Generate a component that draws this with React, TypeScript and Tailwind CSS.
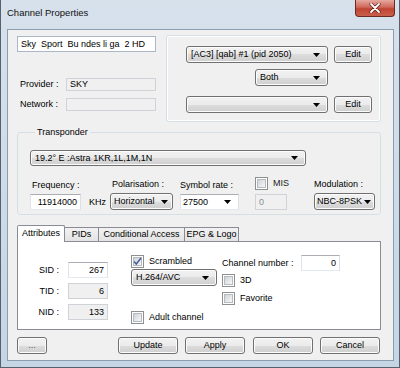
import React from 'react';

// Windows 7 style button / dropdown face
const face =
  'border border-[#707070] rounded-[3px] bg-[linear-gradient(to_bottom,#f2f2f2_0%,#ebebeb_50%,#dddddd_50%,#cfcfcf_100%)] shadow-[inset_0_0_0_1px_#fcfcfc]';

const field = 'border border-[#abadb3] border-l-[#e2e3ea] border-r-[#dbdfe6] border-b-[#e3e9ef]';

function Arrow() {
  return (
    <svg width="7" height="4" viewBox="0 0 7 4" className="shrink-0">
      <path d="M0 0H7L3.5 4Z" fill="#000" />
    </svg>
  );
}

function Drop({ className, text }: { className: string; text?: string }) {
  return (
    <div className={`${face} ${className} flex items-center gap-[2px]`}>
      <span className="flex-1 overflow-hidden whitespace-nowrap">{text}</span>
      <Arrow />
    </div>
  );
}

function Btn({ className, children }: { className: string; children: React.ReactNode }) {
  return <div className={`${face} ${className} h-[17px] flex items-center justify-center`}>{children}</div>;
}

function Box({
  className,
  children,
  disabled,
  right,
}: {
  className: string;
  children?: React.ReactNode;
  disabled?: boolean;
  right?: boolean;
}) {
  return (
    <div
      className={`${className} ${
        disabled ? 'bg-[#f0f0f0] border border-[#cfd2d6]' : `bg-white ${field}`
      } flex items-center px-[3px] whitespace-pre ${right ? 'justify-end' : ''}`}
    >
      {children}
    </div>
  );
}

function Check({ checked }: { checked?: boolean }) {
  return (
    <span className="relative w-[13px] h-[13px] shrink-0 border border-[#8e8f8f] bg-white p-[1px] flex">
      <span className="flex-1 border border-[#b6bbc1] bg-[linear-gradient(135deg,#cfd3d8,#f7f7f7)]" />
      {checked && (
        <svg width="11" height="11" viewBox="0 0 11 11" className="absolute left-[0px] top-[0px]">
          <path d="M2 5.5L4.3 8L9 2" fill="none" stroke="#4a6398" strokeWidth="1.6" />
        </svg>
      )}
    </span>
  );
}

function Tab({ label, active, className }: { label: string; active?: boolean; className: string }) {
  return (
    <div
      className={`${className} border border-[#898c95] border-b-0 flex items-center justify-center ${
        active
          ? 'h-[17px] bg-white -mb-[1px] z-10 rounded-t-[2px] pb-[2px]'
          : 'h-[14px] bg-[linear-gradient(to_bottom,#f2f2f2,#e3e3e3)]'
      }`}
    >
      {label}
    </div>
  );
}

export default function App() {
  return (
    <div className="w-[400px] h-[368px] overflow-hidden font-['Liberation_Sans',Arial,sans-serif] text-[9px] leading-[11px] text-black">
      <div className="h-full flex flex-col border-l border-r border-b border-[#55616e] bg-[linear-gradient(to_bottom,#d7e1ec,#c6d5e4)]">
        {/* Title bar */}
        <div className="h-[29px] flex items-start">
          <div className="pl-[6px] pt-[7px] text-[9.5px] text-[#111]">Channel Properties</div>
          <div className="ml-auto mr-[4px] w-[40px] h-[17px] rounded-b-[4px] border border-t-0 border-[#6b2a22] bg-[linear-gradient(to_bottom,#e5a99f_0%,#d0675a_45%,#bf4432_55%,#c9604c_100%)] flex items-center justify-center">
            <svg width="12" height="10" viewBox="0 0 12 10">
              <path d="M2 1L10 9M10 1L2 9" stroke="#5a2018" strokeWidth="3.2" strokeLinecap="round" />
              <path d="M2 1L10 9M10 1L2 9" stroke="#fff" strokeWidth="1.8" strokeLinecap="round" />
            </svg>
          </div>
        </div>

        {/* Client area */}
        <div className="flex-1 ml-[6px] mr-[5px] mb-[6px] border border-[#8b9db1] bg-[#f0f0f0] flex flex-col">
          {/* Top section */}
          <div className="flex pl-[9px]">
            <div className="w-[139px] pt-[6px] flex flex-col">
              <Box className="h-[16px] w-[139px] !border-[#a9b7c6]">{'Sky  Sport  Bu ndes li ga  2 HD'}</Box>
              <div className="mt-[26px] flex items-center">
                <span className="w-[49px] pl-[3px]">Provider :</span>
                <Box className="h-[13px] w-[90px]" disabled>
                  SKY
                </Box>
              </div>
              <div className="mt-[7px] flex items-center">
                <span className="w-[49px] pl-[3px]">Network :</span>
                <Box className="h-[13px] w-[90px]" disabled />
              </div>
            </div>

            <div className="ml-[10px] mt-[5px] w-[215px] h-[87px] border border-[#d5dfe5] rounded-[3px] shadow-[inset_0_0_0_1px_#ffffff] pl-[19px] pt-[10px] flex flex-col">
              <div className="flex">
                <Drop className="w-[142px] h-[17px] pl-[4px] pr-[7px]" text="[AC3] [qab] #1 (pid 2050)" />
                <Btn className="ml-[6px] w-[38px]">Edit</Btn>
              </div>
              <div className="mt-[6px] pl-[69px] flex">
                <Drop className="w-[73px] h-[17px] pl-[4px] pr-[7px]" text="Both" />
              </div>
              <div className="mt-[10px] flex">
                <Drop className="w-[142px] h-[17px] pl-[4px] pr-[7px]" />
                <Btn className="ml-[6px] w-[38px]">Edit</Btn>
              </div>
            </div>
          </div>

          {/* Transponder */}
          <fieldset className="ml-[9px] mt-[5px] w-[364px] border border-[#d5dfe5] rounded-[3px] pl-[12px] pt-[12px] pb-[4px]">
            <legend className="ml-[5px] px-[2px]">Transponder</legend>
            <Drop className="w-[276px] h-[16px] pl-[4px] pr-[7px]" text={'19.2° E :Astra 1KR,1L,1M,1N'} />
            <div className="mt-[11px] flex items-end">
              <div className="flex flex-col">
                <span className="pl-[2px]">Frequency :</span>
                <Box className="mt-[3px] w-[51px] h-[16px]" right>
                  11914000
                </Box>
              </div>
              <span className="ml-[8px] mb-[2px]">KHz</span>
              <div className="ml-[4px] flex flex-col">
                <span className="pl-[2px]">Polarisation :</span>
                <Drop className="mt-[3px] w-[63px] h-[17px] pl-[3px] pr-[4px]" text="Horizontal" />
              </div>
              <div className="ml-[7px] flex flex-col">
                <span>Symbol rate :</span>
                <div className={`mt-[3px] w-[59px] h-[16px] bg-white ${field} flex items-center pl-[2px] pr-[7px]`}>
                  <span className="flex-1">27500</span>
                  <Arrow />
                </div>
              </div>
              <div className="ml-[16px] flex flex-col">
                <div className="flex items-center gap-[5px]">
                  <Check />
                  <span className="text-[#222]">MIS</span>
                </div>
                <Box className="mt-[4px] w-[32px] h-[16px] text-[#8d8d8d]" disabled>
                  0
                </Box>
              </div>
              <div className="ml-[25px] flex flex-col">
                <span>Modulation :</span>
                <Drop className="mt-[3px] w-[61px] h-[17px] pl-[2px] pr-[3px]" text="NBC-8PSK" />
              </div>
            </div>
          </fieldset>

          {/* Tabs */}
          <div className="ml-[9px] mt-[10px] w-[364px] flex flex-col">
            <div className="flex items-end">
              <Tab label="Attributes" active className="w-[48px]" />
              <Tab label="PIDs" className="w-[35px] -ml-[1px]" />
              <Tab label="Conditional Access" className="w-[87px] -ml-[1px]" />
              <Tab label="EPG & Logo" className="w-[55px] -ml-[1px]" />
            </div>
            <div className="h-[89px] bg-white border border-[#898c95] flex">
              <div className="pt-[20px] flex flex-col gap-[5px]">
                {[
                  ['SID :', '267', false],
                  ['TID :', '6', true],
                  ['NID :', '133', true],
                ].map(([l, v, d]) => (
                  <div key={l as string} className="flex items-center">
                    <span className="w-[41px] text-right">{l}</span>
                    <Box className="ml-[9px] w-[40px] h-[16px]" disabled={d as boolean} right>
                      {v}
                    </Box>
                  </div>
                ))}
              </div>
              <div className="ml-[23px] pt-[13px] flex flex-col">
                <div className="flex items-center gap-[5px]">
                  <Check checked />
                  <span>Scrambled</span>
                </div>
                <Drop className="mt-[1px] w-[86px] h-[17px] pl-[4px] pr-[7px]" text="H.264/AVC" />
                <div className="mt-[25px] flex items-center gap-[5px]">
                  <Check />
                  <span>Adult channel</span>
                </div>
              </div>
              <div className="ml-[5px] pt-[13px] flex flex-col">
                <div className="flex items-center">
                  <span className="w-[79px]">Channel number :</span>
                  <Box className="w-[39px] h-[16px]" right>
                    0
                  </Box>
                </div>
                <div className="mt-[3px] flex items-center gap-[5px]">
                  <Check />
                  <span>3D</span>
                </div>
                <div className="mt-[5px] flex items-center gap-[5px]">
                  <Check />
                  <span>Favorite</span>
                </div>
              </div>
            </div>
          </div>

          {/* Buttons */}
          <div className="ml-[9px] mt-[7px] flex">
            <Btn className="w-[30px] text-[#555]">...</Btn>
            <Btn className="ml-[71px] w-[60px]">Update</Btn>
            <Btn className="ml-[7px] w-[60px]">Apply</Btn>
            <Btn className="ml-[8px] w-[60px]">OK</Btn>
            <Btn className="ml-[7px] w-[60px]">Cancel</Btn>
          </div>
        </div>
      </div>
    </div>
  );
}
